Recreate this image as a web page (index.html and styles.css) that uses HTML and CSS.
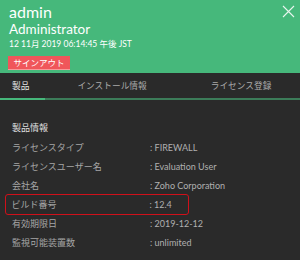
FILE: index.html
```html
<!DOCTYPE html>
<html lang="ja">
<head>
<meta charset="UTF-8">
<title>製品情報</title>
<link rel="stylesheet" href="styles.css">
</head>
<body>
    <div class="panel">
        <div class="user-head">
            <div class="user-name">admin</div>
            <div class="user-role">Administrator</div>
            <div class="user-time">12 11月 2019 06:14:45 午後 JST</div>
            <button class="signout">サインアウト</button>
            <span class="close">
                <svg width="13" height="13" viewBox="0 0 13 13"><path d="M1 1L12 12M12 1L1 12" stroke="#e8f5ee" stroke-width="1.1" fill="none"/></svg>
            </span>
        </div>

        <div class="tabs">
            <div class="tab active">製品</div>
            <div class="tab">インストール情報</div>
            <div class="tab">ライセンス登録</div>
        </div>
        <div class="tab-line"><span class="tab-line-on"></span></div>

        <div class="info">
            <div class="info-title">製品情報</div>
            <div class="row"><span class="key">ライセンスタイプ</span><span class="val">: FIREWALL</span></div>
            <div class="row"><span class="key">ライセンスユーザー名</span><span class="val">: Evaluation User</span></div>
            <div class="row"><span class="key">会社名</span><span class="val">: Zoho Corporation</span></div>
            <div class="row marked"><span class="key">ビルド番号</span><span class="val">: 12.4</span></div>
            <div class="row"><span class="key">有効期限日</span><span class="val">: 2019-12-12</span></div>
            <div class="row"><span class="key">監視可能装置数</span><span class="val">: unlimited</span></div>
        </div>
    </div>
</body>
</html>
```

FILE: styles.css
```css
body {
    margin: 0;
    background-color: #2a2a2a;
    font-family: Lato, "Noto Sans CJK JP", sans-serif;
}
.panel {
    width: 300px;
    height: 260px;
    overflow: hidden;
    background-color: #2a2a2a;
}
.user-head {
    position: relative;
    height: 73px;
    box-sizing: border-box;
    padding: 2px 9px 0 9px;
    background-color: #46b87b;
    color: #fff;
}
.user-name {
    font-size: 16px;
    line-height: 19px;
}
.user-role {
    font-size: 13.5px;
    line-height: 16px;
}
.user-time {
    margin-top: 2px;
    font-size: 8.5px;
    line-height: 11px;
}
.signout {
    margin-top: 4px;
    margin-left: -1px;
    width: 62px;
    height: 14px;
    padding: 0;
    border: none;
    border-bottom: 1px solid #f79a9a;
    background-color: #f0565a;
    color: #fff;
    font-family: "Noto Sans CJK JP", sans-serif;
    font-size: 8.5px;
    line-height: 13px;
}
.close {
    position: absolute;
    top: 2px;
    right: 5px;
}
.tabs {
    display: flex;
    height: 25px;
    align-items: center;
    font-family: "Noto Sans CJK JP", sans-serif;
    font-size: 8.7px;
    color: #a9a9a9;
}
.tab:nth-child(1) {
    margin-left: 12px;
    color: #e6e6e6;
}
.tab:nth-child(2) {
    margin-left: 48px;
}
.tab:nth-child(3) {
    margin-left: 64px;
}
.tab-line {
    display: flex;
    height: 2px;
    background-color: #3c7c59;
}
.tab-line-on {
    width: 45px;
    background-color: #46b87b;
}
.info {
    padding: 21px 0 0 5px;
    font-size: 9px;
}
.info-title {
    margin-left: 7px;
    margin-bottom: 4px;
    color: #e0e0e0;
    font-family: "Noto Sans CJK JP", sans-serif;
}
.row {
    display: flex;
    align-items: center;
    height: 19px;
    box-sizing: border-box;
    padding-left: 7px;
    color: #a6a6a6;
    white-space: nowrap;
}
.row.marked {
    width: 184px;
    height: 21px;
    margin: -1px 0;
    border: 1.5px solid #d0101a;
    border-radius: 3px;
    padding-left: 5.5px;
}
.key {
    flex: none;
    width: 138px;
    font-family: "Noto Sans CJK JP", sans-serif;
}
.val {
    color: #b0b0b0;
}
```
